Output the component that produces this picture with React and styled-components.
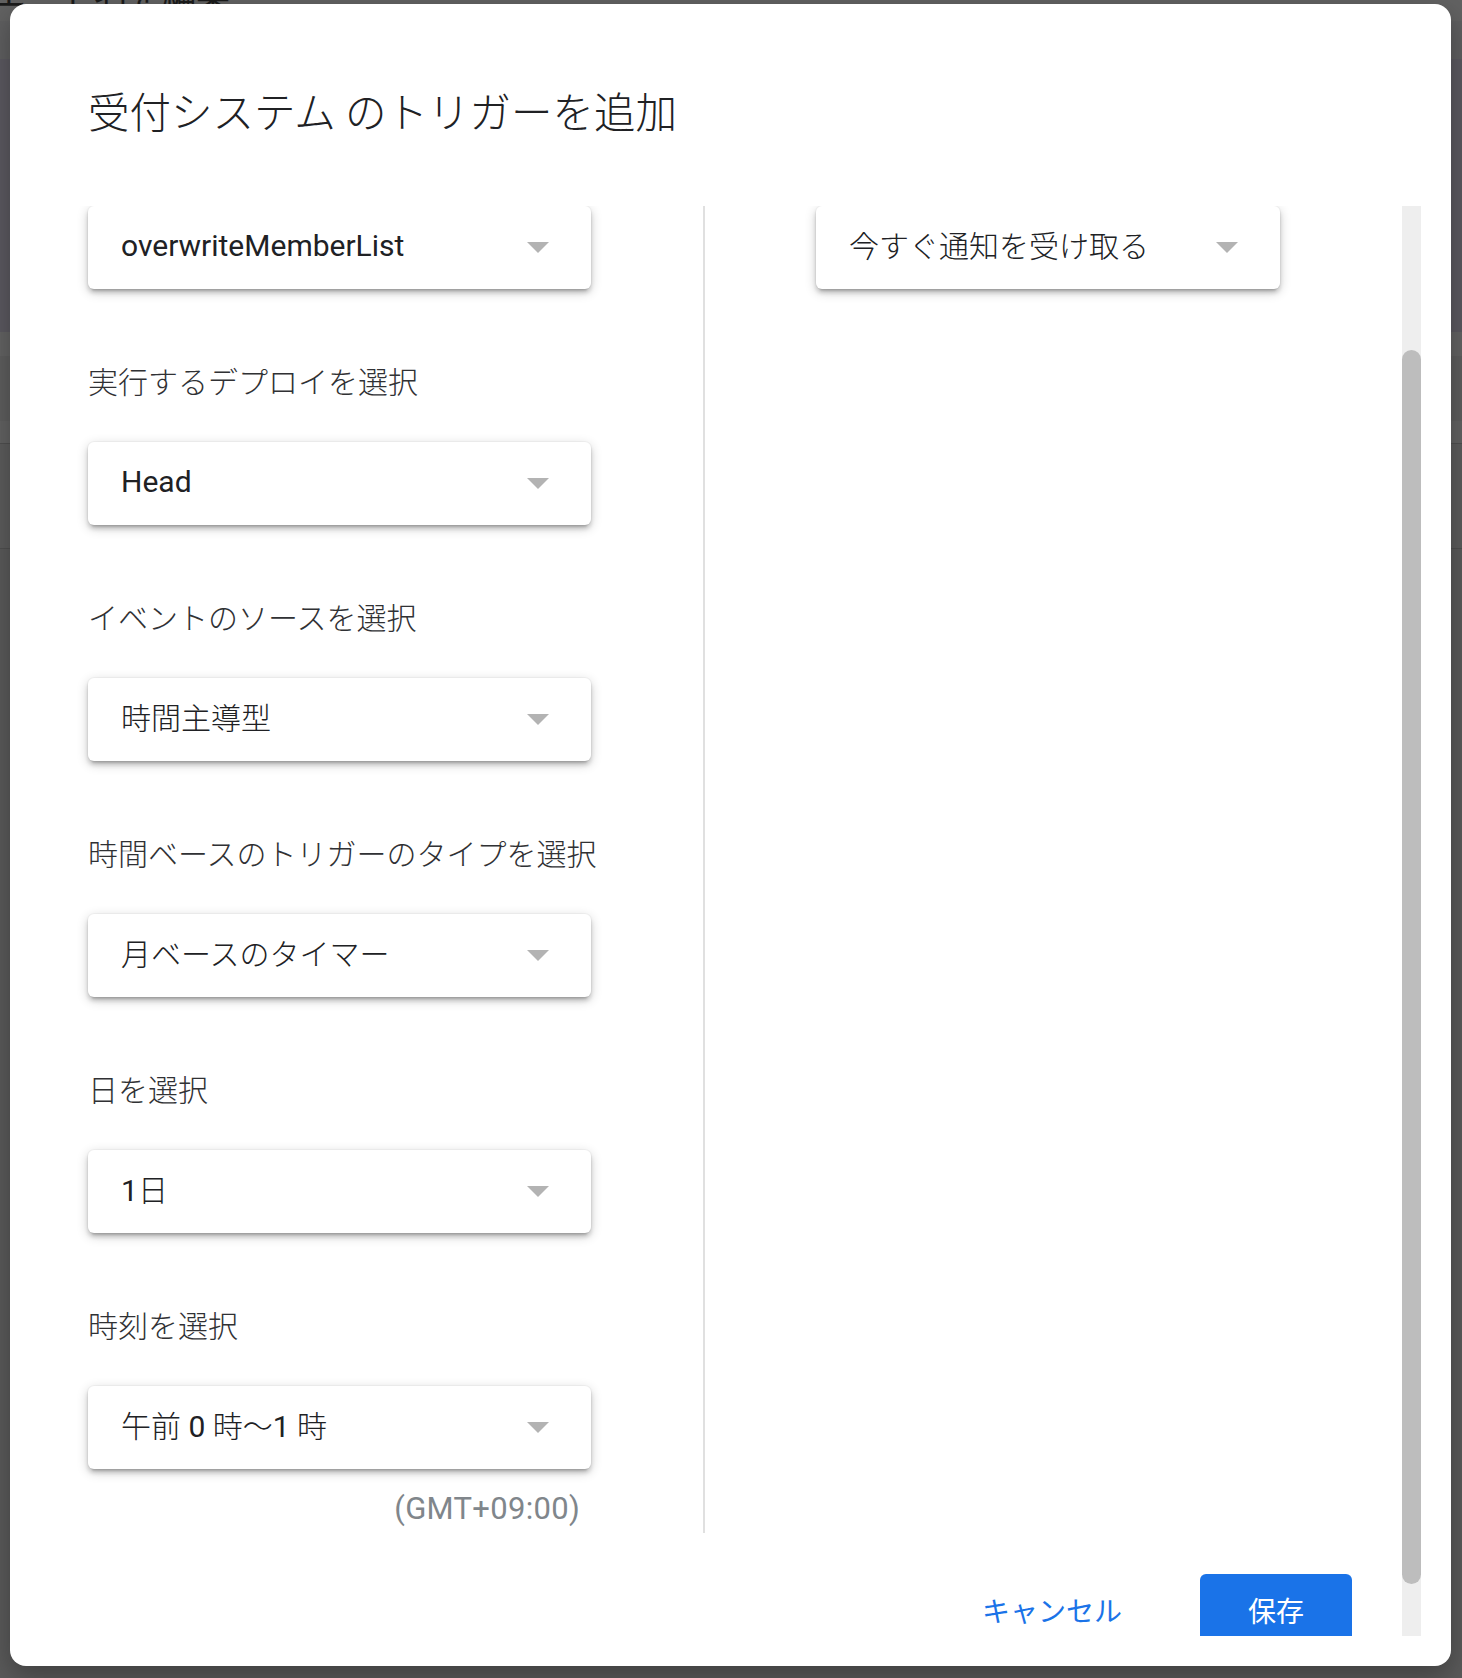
import React, { useLayoutEffect, useRef, useState } from 'react';
import styled, { createGlobalStyle } from 'styled-components';

const GlobalStyle = createGlobalStyle`
  html, body {
    margin: 0;
    padding: 0;
  }
  body {
    background: #5a5a5a;
    font-family: Roboto, "Noto Sans CJK JP", sans-serif;
    -webkit-font-smoothing: antialiased;
  }
  * {
    box-sizing: border-box;
  }
`;

const Page = styled.div`
  position: relative;
  width: 1462px;
  height: 1678px;
  overflow: hidden;
`;

// dimmed editor page behind the modal
const Backdrop = styled.div`
  display: flex;
  flex-direction: column;
  height: 100%;
`;

const Band = styled.div`
  flex-shrink: 0;
  height: ${p => p.$h}px;
  background: ${p => p.$c};
  border-bottom: ${p => (p.$line ? '1px solid #4f4f4f' : 'none')};
  overflow: hidden;
`;

const PageHeading = styled.div`
  margin: -24px 0 0 -8px;
  font: 400 34px/34px "Noto Sans CJK JP", sans-serif;
  color: #1b1b1b;
  white-space: nowrap;
`;

const Dialog = styled.div`
  position: absolute;
  left: 10px;
  top: 4px;
  width: 1441px;
  height: 1662px;
  display: flex;
  flex-direction: column;
  padding: 0 30px 30px 0;
  background: #fff;
  border-radius: 16px;
  box-shadow: 0 10px 28px rgba(0, 0, 0, 0.3);
`;

const Title = styled.h1`
  margin: 0;
  padding: 78px 0 68px 78px;
  font: 300 41.5px/56px "Noto Sans CJK JP", sans-serif;
  color: #202124;
  white-space: nowrap;
`;

const ScrollArea = styled.div`
  height: 1430px;
  flex-shrink: 0;
  display: flex;
`;

const Scroll = styled.div`
  flex: 1;
  min-width: 0;
  overflow: hidden;
  padding-left: 78px;
`;

const Track = styled.div`
  width: 19px;
  flex-shrink: 0;
  background: #eeeeee;
`;

const Thumb = styled.div`
  width: 19px;
  background: #bdbdbd;
  border-radius: 10px;
`;

const Content = styled.div`
  padding-bottom: 50px;
`;

const Columns = styled.div`
  display: grid;
  grid-template-columns: 617px 1fr;
`;

const LeftCol = styled.div`
  padding: 85px 0 4px;
  border-right: 2px solid #e0e0e0;
`;

const RightCol = styled.div`
  padding: 85px 0 0 111px;
`;

const Field = styled.div`
  &:not(:first-child) {
    margin-top: 71px;
  }
`;

const Label = styled.div`
  margin-bottom: 42px;
  font: 300 30px/40px "Noto Sans CJK JP", sans-serif;
  color: #303134;
  white-space: nowrap;
`;

const SelectBox = styled.div`
  width: ${p => p.$w}px;
  height: 83px;
  display: flex;
  align-items: center;
  justify-content: space-between;
  padding: 0 42px 4px 33px;
  background: #fff;
  border-radius: 6px;
  box-shadow: 0 0 0 1px rgba(0, 0, 0, 0.03), 0 4px 4px rgba(0, 0, 0, 0.15),
    0 6px 2px -4px rgba(0, 0, 0, 0.12), 0 3px 12px rgba(0, 0, 0, 0.2);
`;

const SelectText = styled.span`
  font: 400 30px/40px Roboto, "Noto Sans CJK JP", sans-serif;
  color: #202124;
  white-space: nowrap;
`;

const Cjk = styled.span`
  font-family: "Noto Sans CJK JP", sans-serif;
  font-weight: 300;
`;

const CaretBox = styled.svg`
  margin-top: 4px;
  flex-shrink: 0;
`;

const Tz = styled.div`
  width: 503px;
  margin-top: 20px;
  padding-right: 11px;
  text-align: right;
  font: 400 31px/40px Roboto, sans-serif;
  letter-spacing: 0.3px;
  color: #80868b;
`;

const Footer = styled.div`
  display: flex;
  justify-content: flex-end;
  align-items: center;
  gap: 54px;
  margin-top: 41px;
  padding-right: 50px;
`;

const TextButton = styled.button`
  height: 72px;
  padding: 0 24px;
  border: 0;
  background: none;
  font: 400 28px/40px "Noto Sans CJK JP", sans-serif;
  color: #1a73e8;
  cursor: pointer;
`;

const PrimaryButton = styled.button`
  width: 152px;
  height: 72px;
  border: 0;
  border-radius: 6px;
  background: #1a73e8;
  font: 400 28px/40px "Noto Sans CJK JP", sans-serif;
  color: #fff;
  cursor: pointer;
`;

const Caret = () => (
  <CaretBox width="22" height="11" viewBox="0 0 22 11">
    <polygon points="0,0 22,0 11,11" fill="#b3b3b3" />
  </CaretBox>
);

const CJK_RUN = /([\u3000-\u30ff\u4e00-\u9fff\uff00-\uffef]+)/;

const Select = ({ value, width = 503 }) => (
  <SelectBox $w={width}>
    <SelectText>
      {value
        .split(CJK_RUN)
        .filter(Boolean)
        .map((run, i) => (CJK_RUN.test(run) ? <Cjk key={i}>{run}</Cjk> : run))}
    </SelectText>
    <Caret />
  </SelectBox>
);

const bands = [
  { h: 21, c: '#626262' },
  { h: 38, c: '#5f5f60' },
  { h: 273, c: '#5b5960' },
  { h: 24, c: '#636363' },
  { h: 65, c: '#5e5e5e' },
  { h: 23, c: '#626262', line: true },
  { h: 105, c: '#5c5c5c', line: true },
];

const leftFields = [
  { label: '実行する関数を選択', value: 'overwriteMemberList' },
  { label: '実行するデプロイを選択', value: 'Head' },
  { label: 'イベントのソースを選択', value: '時間主導型' },
  { label: '時間ベースのトリガーのタイプを選択', value: '月ベースのタイマー' },
  { label: '日を選択', value: '1日' },
  { label: '時刻を選択', value: '午前 0 時〜1 時' },
];

const SCROLL_TOP = 167;

export default function App() {
  const scrollRef = useRef(null);
  const [thumb, setThumb] = useState({ top: 144, height: 1234 });

  useLayoutEffect(() => {
    const el = scrollRef.current;
    if (!el) return;
    el.scrollTop = SCROLL_TOP;
    const track = el.clientHeight;
    const total = el.scrollHeight;
    setThumb({
      top: Math.round((el.scrollTop * track) / total),
      height: Math.round((track * track) / total),
    });
  }, []);

  return (
    <Page>
      <GlobalStyle />
      <Backdrop>
        {bands.map((b, i) => (
          <Band key={i} $h={b.h} $c={b.c} $line={b.line}>
            {i === 0 && <PageHeading>エート名を編集</PageHeading>}
          </Band>
        ))}
      </Backdrop>

      <Dialog>
        <Title>受付システム のトリガーを追加</Title>
        <ScrollArea>
          <Scroll ref={scrollRef}>
            <Content>
              <Columns>
                <LeftCol>
                  {leftFields.map(f => (
                    <Field key={f.label}>
                      <Label>{f.label}</Label>
                      <Select value={f.value} />
                    </Field>
                  ))}
                  <Tz>(GMT+09:00)</Tz>
                </LeftCol>
                <RightCol>
                  <Field>
                    <Label>エラー通知設定 ＋</Label>
                    <Select value="今すぐ通知を受け取る" width={464} />
                  </Field>
                </RightCol>
              </Columns>
              <Footer>
                <TextButton>キャンセル</TextButton>
                <PrimaryButton>保存</PrimaryButton>
              </Footer>
            </Content>
          </Scroll>
          <Track>
            <Thumb style={{ marginTop: thumb.top, height: thumb.height }} />
          </Track>
        </ScrollArea>
      </Dialog>
    </Page>
  );
}
